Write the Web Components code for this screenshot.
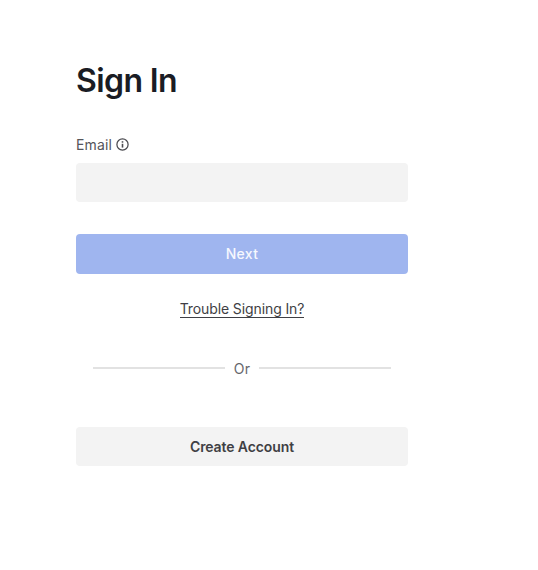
<!DOCTYPE html>
<html>
<head>
<meta charset="utf-8">
<title>Sign In</title>
<style>
    html, body { margin: 0; padding: 0; background: #fff; }
</style>
</head>
<body>
<signin-page></signin-page>
<script>
const FONT = "Inter, 'Liberation Sans', sans-serif";

window.customElements.define('action-button', class extends HTMLElement {
    constructor() {
        super();
        this.attachShadow({ mode: 'open' });
        this.shadowRoot.innerHTML = `
            <style>
                :host {
                    display: flex;
                    align-items: center;
                    justify-content: center;
                    height: 39.5px;
                    border-radius: 4px;
                    background-color: #f3f3f3;
                    color: #3f3f44;
                    font: 600 14px/21px ${FONT};
                    letter-spacing: -0.1px;
                }
                :host([primary]) {
                    background-color: #9fb5ef;
                    color: #f6f8fe;
                    font-weight: 500;
                    letter-spacing: 0.3px;
                }
            </style>
            <slot></slot>
        `;
    }
});

window.customElements.define('email-field', class extends HTMLElement {
    constructor() {
        super();
        this.attachShadow({ mode: 'open' });
        this.shadowRoot.innerHTML = `
            <style>
                :host { display: block; }
                .label {
                    display: flex;
                    align-items: center;
                    gap: 4px;
                    height: 20px;
                    margin-bottom: 8px;
                    color: #55555a;
                    font: 400 14px/20px ${FONT};
                    letter-spacing: 0.15px;
                }
                svg { display: block; margin-top: -1px; }
                .input {
                    height: 39.5px;
                    border-radius: 4px;
                    background-color: #f3f3f3;
                }
            </style>
            <div class="label">
                <slot></slot>
                <svg width="13" height="13" viewBox="0 0 13 13" fill="none" stroke="#4a4a4f">
                    <circle cx="6.5" cy="6.5" r="5.6" stroke-width="1.25"></circle>
                    <path d="M6.5 5.8V9.6" stroke-width="1.6"></path>
                    <path d="M6.5 3.2V4.7" stroke-width="1.6"></path>
                </svg>
            </div>
            <div class="input"></div>
        `;
    }
});

window.customElements.define('or-divider', class extends HTMLElement {
    constructor() {
        super();
        this.attachShadow({ mode: 'open' });
        this.shadowRoot.innerHTML = `
            <style>
                :host {
                    display: flex;
                    align-items: center;
                    gap: 9px;
                    padding: 0 17px;
                    color: #66666b;
                    font: 400 14px/20px ${FONT};
                    letter-spacing: 0.2px;
                }
                i {
                    flex: 1;
                    height: 1.5px;
                    margin-top: -1px;
                    background-color: #e2e2e2;
                }
            </style>
            <i></i><slot></slot><i></i>
        `;
    }
});

window.customElements.define('signin-page', class extends HTMLElement {
    constructor() {
        super();
        this.attachShadow({ mode: 'open' });
        this.shadowRoot.innerHTML = `
            <style>
                :host {
                    display: block;
                    width: 332px;
                    padding: 61px 0 0 76px;
                    font-family: ${FONT};
                }
                h1 {
                    margin: 0 0 33.5px;
                    color: #1a1c24;
                    font: 600 32px/40px ${FONT};
                    letter-spacing: -0.6px;
                }
                .next { margin-top: 32px; }
                .trouble {
                    display: flex;
                    justify-content: center;
                    margin-top: 26px;
                }
                .trouble a {
                    color: #3f3f44;
                    font: 400 14px/17px ${FONT};
                    letter-spacing: -0.1px;
                    border-bottom: 1px solid #3f3f44;
                    text-decoration: none;
                }
                or-divider { margin-top: 41px; }
                .create { margin-top: 48px; }
            </style>
            <h1>Sign In</h1>
            <email-field>Email</email-field>
            <action-button class="next" primary>Next</action-button>
            <div class="trouble"><a>Trouble Signing In?</a></div>
            <or-divider>Or</or-divider>
            <action-button class="create">Create Account</action-button>
        `;
    }
});
</script>
</body>
</html>
